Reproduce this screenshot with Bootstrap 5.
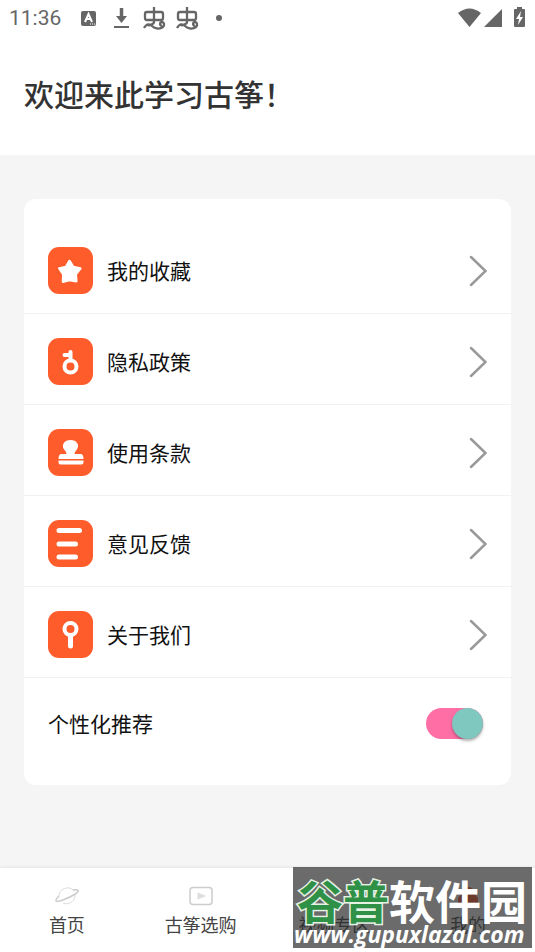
<!DOCTYPE html>
<html lang="zh-CN">
<head>
<meta charset="utf-8">
<meta name="viewport" content="width=device-width, initial-scale=1">
<title>我的</title>
<link rel="stylesheet" href="https://cdn.jsdelivr.net/npm/bootstrap@5.3.0/dist/css/bootstrap.min.css">
<style>
body{font-family:"Noto Sans CJK SC",sans-serif;background:#f5f5f5;color:#111}
.status-bar{height:36px;padding:0 8px 0 9px;color:#666;font:21px/36px Roboto,sans-serif}
.status-bar svg{display:block}
.page-head{padding:34px 24px 38px}
.page-head h1{font-size:30px;line-height:47px;font-weight:500;color:#333}
.menu-card{margin:44px 24px 0;padding:24px 0 16px;border-radius:12px}
.menu-row{padding:24px 24px 19px;gap:14px;border-bottom:1px solid #f2f2f2;font-size:21px;line-height:47px;color:#111}
.tile{border-radius:11px;background:#ff5c2c;width:45px;height:47px;flex:none}
.switch-row{padding:0 28px 0 24px;height:91px;font-size:21px}
.rec-switch{appearance:none;width:57px;height:31px;border-radius:16px;background:#ff6fa5;margin:0;display:flex;justify-content:flex-end;cursor:pointer}
.rec-switch::before{content:"";width:31px;height:31px;border-radius:50%;background:#7fc8c0;box-shadow:0 2px 3px rgba(0,0,0,.3)}
.rec-switch:not(:checked){justify-content:flex-start;background:#ccc}
.tab-bar{height:84px;box-shadow:0 -1px 3px rgba(0,0,0,.07)}
.tab-link{color:#444;font-size:18px;line-height:26px;padding-top:17px}
.site-mark{right:3px;bottom:4px;width:239px;height:81px;background:rgba(44,44,44,.7);color:#fff;pointer-events:none}
.mark-name{font-size:46px;line-height:46px;font-weight:700;padding:9px 0 0 4px}
.mark-name span{color:#2f9145;-webkit-text-stroke:3px #e6f2e6;paint-order:stroke fill}
.mark-url{font:italic 700 23px/24px "Open Sans",sans-serif;padding-left:1px}
</style>
</head>
<body class="min-vh-100 d-flex flex-column">
<div class="bg-white">
  <div class="status-bar d-flex align-items-center justify-content-between">
    <div class="d-flex align-items-center">
      <span>11:36</span>
      <svg class="ms-3" width="150" height="28" viewBox="78 4 150 28" fill="none" stroke="#666" stroke-width="2" aria-hidden="true">
        <rect x="82" y="11" width="15" height="15" rx="2" fill="#666" stroke="none"/>
        <path d="M86 22l3.500-8 3.500 8M87.500 19h4" stroke="#fff"/><path d="M91 24h5" stroke="#fff" stroke-width="1" stroke-dasharray="1 1"/>
        <path d="M122.500 8v9" stroke-width="3.500"/><path d="M117 16h11l-5.500 7z" fill="#666" stroke="none"/><path d="M115 27h15"/>
        <g id="bug" stroke-width="2.300" stroke-linejoin="round"><rect x="146" y="12" width="18" height="8" rx="2"/><path d="M155 7v15c0 3-4 2-6 4M145 28c3-5 6-4 8-2s7 4 11 1c2-2 1-5-1-5s-3 3 0 4"/></g>
        <use href="#bug" x="33"/>
        <circle cx="220" cy="18" r="3" fill="#666" stroke="none"/>
      </svg>
    </div>
    <svg width="70" height="28" viewBox="457 4 70 28" fill="#666" aria-hidden="true">
      <path d="M458 13q11.500-9 23 0l-11.500 14zM502 9v18h-18zM514 10q0-1 1-1h2V7h5v2h2q1 0 1 1v16q0 1-1 1h-9q-1 0-1-1z"/><path d="M521 11l-5 8h3l-1 6 5-8h-3z" fill="#fff"/>
    </svg>
  </div>
  <header class="page-head"><h1 class="m-0">欢迎来此学习古筝！</h1></header>
</div>
<main class="flex-grow-1">
  <section class="menu-card bg-white">
    <a href="#" class="menu-row d-flex align-items-center text-decoration-none">
      <svg class="tile" viewBox="0 0 45 47" aria-hidden="true"><path d="M21.500 14l3.800 6 7 1.500-4.500 5.700.5 7-6.800-1.200-6.500 1.700.3-7.300-4-6 6.700-1.400z" fill="#fff" stroke="#fff" stroke-width="2.500" stroke-linejoin="round"/></svg>
      <span class="flex-grow-1">我的收藏</span>
      <svg width="18" height="32" fill="none" stroke="#999" stroke-width="2.500" stroke-linecap="round" aria-hidden="true"><path d="M2 2l14.500 14L2 30"/></svg>
    </a>
    <a href="#" class="menu-row d-flex align-items-center text-decoration-none">
      <svg class="tile" viewBox="0 0 45 47" fill="none" stroke="#fff" stroke-width="4" aria-hidden="true"><circle cx="22.500" cy="28.500" r="6"/><path d="M22.500 22v-8M16.500 17h6" stroke-linecap="round"/></svg>
      <span class="flex-grow-1">隐私政策</span>
      <svg width="18" height="32" fill="none" stroke="#999" stroke-width="2.500" stroke-linecap="round" aria-hidden="true"><path d="M2 2l14.500 14L2 30"/></svg>
    </a>
    <a href="#" class="menu-row d-flex align-items-center text-decoration-none">
      <svg class="tile" viewBox="0 0 45 47" fill="#fff" aria-hidden="true"><path d="M18.500 25q0-2-2-4c-4-5 0-10 6-10s10 5 6 10q-2 2-2 4h6q3 0 3 5H10.500q0-5 3-5zM10.500 31.500h25v2q0 2-2 2h-21q-2 0-2-2z"/></svg>
      <span class="flex-grow-1">使用条款</span>
      <svg width="18" height="32" fill="none" stroke="#999" stroke-width="2.500" stroke-linecap="round" aria-hidden="true"><path d="M2 2l14.500 14L2 30"/></svg>
    </a>
    <a href="#" class="menu-row d-flex align-items-center text-decoration-none">
      <svg class="tile" viewBox="0 0 45 47" stroke="#fff" stroke-width="5" stroke-linecap="round" aria-hidden="true"><path d="M11 10.500h20.500M11 24h16.500M11 37h16.500"/></svg>
      <span class="flex-grow-1">意见反馈</span>
      <svg width="18" height="32" fill="none" stroke="#999" stroke-width="2.500" stroke-linecap="round" aria-hidden="true"><path d="M2 2l14.500 14L2 30"/></svg>
    </a>
    <a href="#" class="menu-row d-flex align-items-center text-decoration-none">
      <svg class="tile" viewBox="0 0 45 47" fill="none" stroke="#fff" stroke-width="4" aria-hidden="true"><circle cx="22.500" cy="18" r="6"/><path d="M22.500 25v10" stroke-width="5" stroke-linecap="round"/></svg>
      <span class="flex-grow-1">关于我们</span>
      <svg width="18" height="32" fill="none" stroke="#999" stroke-width="2.500" stroke-linecap="round" aria-hidden="true"><path d="M2 2l14.500 14L2 30"/></svg>
    </a>
    <div class="switch-row d-flex align-items-center justify-content-between">
      <label for="rec">个性化推荐</label>
      <input class="rec-switch" type="checkbox" role="switch" id="rec" checked>
    </div>
  </section>
</main>
<div class="position-sticky bottom-0">
  <nav class="tab-bar bg-white row g-0">
    <a href="#" class="tab-link col d-flex flex-column align-items-center text-decoration-none gap-1">
      <svg width="24" height="22" fill="none" stroke="#ccc" aria-hidden="true"><path d="M4 12a8.500 8.500 0 0 1 15-6M20 10a8.500 8.500 0 0 1-12 8" stroke="#ddd"/><path d="M4 11C-1 16 0 18 8 15S27 6 22 5q-2-.5-4 0" stroke-width="1.500"/></svg>
      首页</a>
    <a href="#" class="tab-link col d-flex flex-column align-items-center text-decoration-none gap-1">
      <svg width="24" height="22" fill="none" stroke="#ccc" aria-hidden="true"><rect x="1" y="2.500" width="22" height="17" rx="3" stroke-width="1.500"/><path d="M9 8l7 3-7 3z" fill="#ddd" stroke="#ddd"/></svg>
      古筝选购</a>
    <a href="#" class="tab-link col d-flex flex-column align-items-center text-decoration-none gap-1">
      <svg width="24" height="22" fill="none" stroke="#ddd" aria-hidden="true"><rect x="2" y="3" width="20" height="16" rx="3"/></svg>
      视频专区</a>
    <a href="#" class="tab-link col d-flex flex-column align-items-center text-decoration-none gap-1">
      <svg width="24" height="22" fill="#ff5c2c" aria-hidden="true"><path d="M6 8q0-6 6-6t6 6l4 5v5H2v-5z"/></svg>
      我的</a>
  </nav>
  <div class="site-mark position-absolute text-nowrap">
    <div class="mark-name"><span>谷普</span>软件园</div>
    <div class="mark-url">www.gupuxlazal.com</div>
  </div>
</div>
<script src="https://cdn.jsdelivr.net/npm/bootstrap@5.3.0/dist/js/bootstrap.bundle.min.js"></script>
</body>
</html>
